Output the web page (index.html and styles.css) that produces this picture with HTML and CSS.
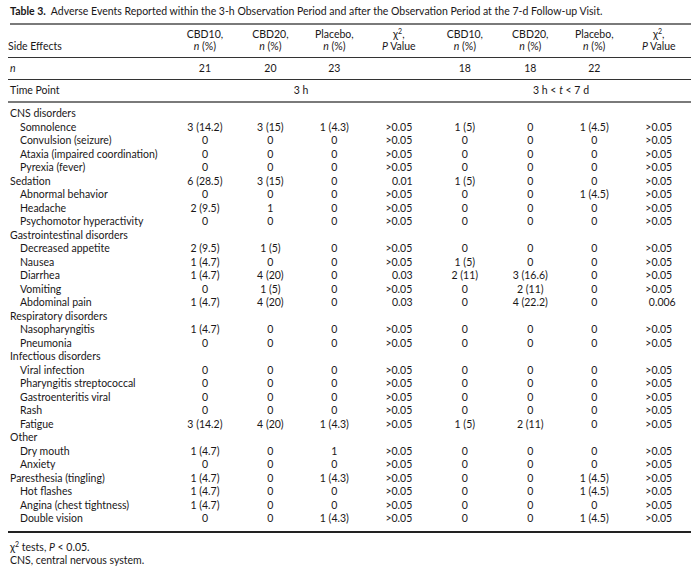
FILE: index.html
```html
<!DOCTYPE html>
<html lang="en">
<head>
    <meta charset="UTF-8">
    <meta name="viewport" content="width=device-width, initial-scale=1.0">
    <title>Table 3. Adverse Events</title>
    <link rel="stylesheet" href="styles.css">
</head>
<body>
    <div class="container">
        <p class="caption"><b>Table 3.</b>&nbsp; Adverse Events Reported within the 3-h Observation Period and after the Observation Period at the 7-d Follow-up Visit.</p>
        <table class="ae-table">
            <colgroup>
                <col class="c-name">
                <col class="c-a"><col class="c-b"><col class="c-c"><col class="c-d">
                <col class="c-a"><col class="c-b"><col class="c-c"><col class="c-d">
            </colgroup>
            <thead>
                <tr class="head-row">
                    <th class="name">Side Effects</th>
                    <th>CBD10,<br><i>n</i> (%)</th>
                    <th>CBD20,<br><i>n</i> (%)</th>
                    <th>Placebo,<br><i>n</i> (%)</th>
                    <th>&chi;<sup>2</sup>,<br><i>P</i> Value</th>
                    <th>CBD10,<br><i>n</i> (%)</th>
                    <th>CBD20,<br><i>n</i> (%)</th>
                    <th>Placebo,<br><i>n</i> (%)</th>
                    <th>&chi;<sup>2</sup>,<br><i>P</i> Value</th>
                </tr>
                <tr class="n-row">
                    <td class="name"><i>n</i></td>
                    <td>21</td><td>20</td><td>23</td><td></td>
                    <td>18</td><td>18</td><td>22</td><td></td>
                </tr>
                <tr class="time-row">
                    <td class="name">Time Point</td>
                    <td colspan="4">3 h</td>
                    <td colspan="4">3 h &lt; <i>t</i> &lt; 7 d</td>
                </tr>
            </thead>
            <tbody>
                <tr class="first"><td class="name">CNS disorders</td><td></td><td></td><td></td><td></td><td></td><td></td><td></td><td></td></tr>
                <tr><td class="name sub">Somnolence</td><td>3 (14.2)</td><td>3 (15)</td><td>1 (4.3)</td><td>&gt;0.05</td><td>1 (5)</td><td>0</td><td>1 (4.5)</td><td>&gt;0.05</td></tr>
                <tr><td class="name sub">Convulsion (seizure)</td><td>0</td><td>0</td><td>0</td><td>&gt;0.05</td><td>0</td><td>0</td><td>0</td><td>&gt;0.05</td></tr>
                <tr><td class="name sub">Ataxia (impaired coordination)</td><td>0</td><td>0</td><td>0</td><td>&gt;0.05</td><td>0</td><td>0</td><td>0</td><td>&gt;0.05</td></tr>
                <tr><td class="name sub">Pyrexia (fever)</td><td>0</td><td>0</td><td>0</td><td>&gt;0.05</td><td>0</td><td>0</td><td>0</td><td>&gt;0.05</td></tr>
                <tr><td class="name">Sedation</td><td>6 (28.5)</td><td>3 (15)</td><td>0</td><td class="dec">0.01</td><td>1 (5)</td><td>0</td><td>0</td><td>&gt;0.05</td></tr>
                <tr><td class="name sub">Abnormal behavior</td><td>0</td><td>0</td><td>0</td><td>&gt;0.05</td><td>0</td><td>0</td><td>1 (4.5)</td><td>&gt;0.05</td></tr>
                <tr><td class="name sub">Headache</td><td>2 (9.5)</td><td>1</td><td>0</td><td>&gt;0.05</td><td>0</td><td>0</td><td>0</td><td>&gt;0.05</td></tr>
                <tr><td class="name sub">Psychomotor hyperactivity</td><td>0</td><td>0</td><td>0</td><td>&gt;0.05</td><td>0</td><td>0</td><td>0</td><td>&gt;0.05</td></tr>
                <tr><td class="name">Gastrointestinal disorders</td><td></td><td></td><td></td><td></td><td></td><td></td><td></td><td></td></tr>
                <tr><td class="name sub">Decreased appetite</td><td>2 (9.5)</td><td>1 (5)</td><td>0</td><td>&gt;0.05</td><td>0</td><td>0</td><td>0</td><td>&gt;0.05</td></tr>
                <tr><td class="name sub">Nausea</td><td>1 (4.7)</td><td>0</td><td>0</td><td>&gt;0.05</td><td>1 (5)</td><td>0</td><td>0</td><td>&gt;0.05</td></tr>
                <tr><td class="name sub">Diarrhea</td><td>1 (4.7)</td><td>4 (20)</td><td>0</td><td class="dec">0.03</td><td>2 (11)</td><td>3 (16.6)</td><td>0</td><td>&gt;0.05</td></tr>
                <tr><td class="name sub">Vomiting</td><td>0</td><td>1 (5)</td><td>0</td><td>&gt;0.05</td><td>0</td><td>2 (11)</td><td>0</td><td>&gt;0.05</td></tr>
                <tr><td class="name sub">Abdominal pain</td><td>1 (4.7)</td><td>4 (20)</td><td>0</td><td class="dec">0.03</td><td>0</td><td>4 (22.2)</td><td>0</td><td class="dec">0.006</td></tr>
                <tr><td class="name">Respiratory disorders</td><td></td><td></td><td></td><td></td><td></td><td></td><td></td><td></td></tr>
                <tr><td class="name sub">Nasopharyngitis</td><td>1 (4.7)</td><td>0</td><td>0</td><td>&gt;0.05</td><td>0</td><td>0</td><td>0</td><td>&gt;0.05</td></tr>
                <tr><td class="name sub">Pneumonia</td><td>0</td><td>0</td><td>0</td><td>&gt;0.05</td><td>0</td><td>0</td><td>0</td><td>&gt;0.05</td></tr>
                <tr><td class="name">Infectious disorders</td><td></td><td></td><td></td><td></td><td></td><td></td><td></td><td></td></tr>
                <tr><td class="name sub">Viral infection</td><td>0</td><td>0</td><td>0</td><td>&gt;0.05</td><td>0</td><td>0</td><td>0</td><td>&gt;0.05</td></tr>
                <tr><td class="name sub">Pharyngitis streptococcal</td><td>0</td><td>0</td><td>0</td><td>&gt;0.05</td><td>0</td><td>0</td><td>0</td><td>&gt;0.05</td></tr>
                <tr><td class="name sub">Gastroenteritis viral</td><td>0</td><td>0</td><td>0</td><td>&gt;0.05</td><td>0</td><td>0</td><td>0</td><td>&gt;0.05</td></tr>
                <tr><td class="name sub">Rash</td><td>0</td><td>0</td><td>0</td><td>&gt;0.05</td><td>0</td><td>0</td><td>0</td><td>&gt;0.05</td></tr>
                <tr><td class="name sub">Fatigue</td><td>3 (14.2)</td><td>4 (20)</td><td>1 (4.3)</td><td>&gt;0.05</td><td>1 (5)</td><td>2 (11)</td><td>0</td><td>&gt;0.05</td></tr>
                <tr><td class="name">Other</td><td></td><td></td><td></td><td></td><td></td><td></td><td></td><td></td></tr>
                <tr><td class="name sub">Dry mouth</td><td>1 (4.7)</td><td>0</td><td>1</td><td>&gt;0.05</td><td>0</td><td>0</td><td>0</td><td>&gt;0.05</td></tr>
                <tr><td class="name sub">Anxiety</td><td>0</td><td>0</td><td>0</td><td>&gt;0.05</td><td>0</td><td>0</td><td>0</td><td>&gt;0.05</td></tr>
                <tr><td class="name">Paresthesia (tingling)</td><td>1 (4.7)</td><td>0</td><td>1 (4.3)</td><td>&gt;0.05</td><td>0</td><td>0</td><td>1 (4.5)</td><td>&gt;0.05</td></tr>
                <tr><td class="name sub">Hot flashes</td><td>1 (4.7)</td><td>0</td><td>0</td><td>&gt;0.05</td><td>0</td><td>0</td><td>1 (4.5)</td><td>&gt;0.05</td></tr>
                <tr><td class="name sub">Angina (chest tightness)</td><td>1 (4.7)</td><td>0</td><td>0</td><td>&gt;0.05</td><td>0</td><td>0</td><td>0</td><td>&gt;0.05</td></tr>
                <tr><td class="name sub">Double vision</td><td>0</td><td>0</td><td>1 (4.3)</td><td>&gt;0.05</td><td>0</td><td>0</td><td>1 (4.5)</td><td>&gt;0.05</td></tr>
            </tbody>
        </table>
        <div class="table-rule"></div>
        <div class="notes">
            <p>&chi;<sup>2</sup> tests, <i>P</i> &lt; 0.05.</p>
            <p>CNS, central nervous system.</p>
        </div>
    </div>
</body>
</html>
```

FILE: styles.css
```css
body {
    font-family: Lato, "Open Sans", sans-serif;
    font-size: 10.5px;
    color: #1a1718;
    background: #fff;
    margin: 0;
    padding: 0;
}
.container {
    width: 683px;
    padding: 5px 0 0 8px;
}
.caption {
    margin: 0 0 0 2px;
    line-height: 13px;
    padding-bottom: 5px;
    border-bottom: 2px solid #7a7a7a;
}
.caption b {
    font-weight: 700;
}
.ae-table {
    width: 683px;
    border-collapse: collapse;
    table-layout: fixed;
}
.c-name { width: 162px; }
.c-a { width: 67px; }
.c-b { width: 63px; }
.c-c { width: 64px; }
.c-d { width: 64px; }
th, td {
    padding: 0;
    text-align: center;
    font-weight: 400;
    line-height: 13.5px;
    white-space: nowrap;
}
.name {
    text-align: left;
    padding-left: 2px;
}
.name.sub {
    padding-left: 12px;
}
sup {
    font-size: 7px;
    line-height: 0;
}
.head-row th {
    vertical-align: bottom;
    line-height: 12px;
    padding: 3px 0 5px;
    border-bottom: 1px solid #333;
}
.n-row td {
    height: 21px;
    border-bottom: 1px solid #333;
}
.time-row td {
    height: 21px;
    border-bottom: 2px solid #7a7a7a;
}
.first td {
    padding-top: 4px;
}
.dec {
    padding-left: 7px;
}
.table-rule {
    height: 2px;
    margin-top: 5px;
    background: #222;
}
.notes {
    padding: 8px 0 0 2px;
}
.notes p {
    margin: 0;
    line-height: 13px;
}
```
